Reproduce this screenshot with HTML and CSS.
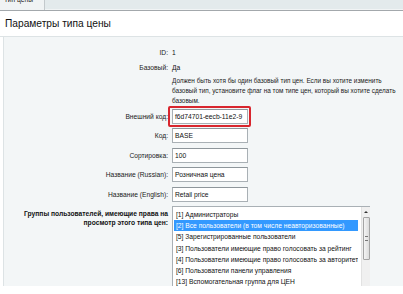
FILE: index.html
```html
<!DOCTYPE html>
<html lang="ru">
<head>
<meta charset="utf-8">
<title>Параметры типа цены</title>
<link rel="stylesheet" href="styles.css">
</head>
<body>
<div class="tabs"><div class="tab"><span class="tab-text">Тип цены</span></div></div>
<h1 class="title">Параметры типа цены</h1>
<div class="panel">
  <div class="row r15"><div class="lbl">ID:</div><div class="val">1</div></div>
  <div class="row r15"><div class="lbl">Базовый:</div><div class="val">Да</div></div>
  <div class="row note-row"><div class="lbl"></div><div class="val note">Должен быть хотя бы один базовый тип цен. Если вы хотите изменить<br>базовый тип, установите флаг на том типе цен, который вы хотите сделать<br>базовым.</div></div>
  <div class="row r20"><div class="lbl">Внешний код:</div><div class="val"><span class="marked"><span class="input">f6d74701-eecb-11e2-9</span><span class="redbox"></span></span></div></div>
  <div class="row r19"><div class="lbl">Код:</div><div class="val"><span class="input">BASE</span></div></div>
  <div class="row r19"><div class="lbl">Сортировка:</div><div class="val"><span class="input">100</span></div></div>
  <div class="row r19"><div class="lbl">Название (Russian):</div><div class="val"><span class="input">Розничная цена</span></div></div>
  <div class="row r19"><div class="lbl">Название (English):</div><div class="val"><span class="input">Retail price</span></div></div>
  <div class="row groups">
    <div class="lbl bold">Группы пользователей, имеющие права на<br>просмотр этого типа цен:</div>
    <div class="val">
      <div class="select">
        <div class="options">
          <div class="opt">[1] Администраторы</div>
          <div class="opt sel">[2] Все пользователи (в том числе неавторизованные)</div>
          <div class="opt">[5] Зарегистрированные пользователи</div>
          <div class="opt">[3] Пользователи имеющие право голосовать за рейтинг</div>
          <div class="opt">[4] Пользователи имеющие право голосовать за авторитет</div>
          <div class="opt">[6] Пользователи панели управления</div>
          <div class="opt">[13] Вспомогательная группа для ЦЕН</div>
          <div class="opt">[12] Администраторы информационного раздела</div>
        </div>
        <div class="scrollbar">
          <div class="arrow"></div>
          <div class="thumb"><div class="grip"></div></div>
        </div>
      </div>
    </div>
  </div>
</div>
</body>
</html>
```

FILE: styles.css
```css
html, body {
  margin: 0;
  padding: 0;
  background: #ffffff;
  overflow: hidden;
}
body {
  font-family: "Liberation Sans", Arial, sans-serif;
  font-size: 6.7px;
  color: #1a1a1a;
  width: 403px;
  height: 294px;
}
.tabs {
  height: 10px;
  background: #e3eaec;
  border-bottom: 1px solid #a3a8ac;
  box-shadow: inset 0 -1px 0 #f1f4f5;
  display: flex;
  overflow: hidden;
}
.tab {
  width: 44px;
  background: #f0f3f4;
  border-right: 1px solid #c3c9cc;
  overflow: hidden;
}
.tab-text {
  display: block;
  margin-top: -5px;
  padding-left: 4px;
  line-height: 9px;
  color: #222;
}
.title {
  margin: 0;
  display: flex;
  align-items: center;
  padding-left: 5px;
  font-size: 10.2px;
  font-weight: normal;
  color: #111;
  border-bottom: 1px solid #dde3e5;
  box-sizing: border-box;
  height: 26px;
}
.panel {
  margin-left: 3px;
  border-left: 1px solid #dde3e5;
  background: #f3f6f7;
  padding-top: 8px;
  height: 249px;
  box-sizing: border-box;
  overflow: hidden;
}
.row {
  display: flex;
  align-items: center;
}
.r15 { height: 15px; }
.r20 { height: 20px; }
.r19 { height: 19.5px; }
.note-row { height: 31px; }
.lbl {
  width: 164px;
  flex: none;
  text-align: right;
  color: #222;
}
.val {
  margin-left: 4px;
  color: #111;
}
.note {
  font-size: 6.4px;
  line-height: 10px;
  white-space: nowrap;
  color: #222;
}
.input {
  display: flex;
  align-items: center;
  box-sizing: border-box;
  width: 76px;
  height: 15px;
  background: #fff;
  border: 1px solid #a9b0b5;
  border-top-color: #8e969b;
  padding-left: 2px;
  white-space: nowrap;
  overflow: hidden;
  color: #111;
}
.marked {
  position: relative;
  display: block;
}
.redbox {
  position: absolute;
  left: -4px;
  right: -3px;
  top: -3px;
  bottom: -3px;
  border: 2px solid #d8262e;
  border-radius: 2px;
}
.groups {
  align-items: flex-start;
  margin-top: 2px;
}
.bold {
  font-weight: bold;
  line-height: 9px;
  padding-top: 3px;
  color: #111;
}
.select {
  width: 198px;
  height: 120px;
  box-sizing: border-box;
  background: #fff;
  border: 1px solid #a9b0b5;
  display: flex;
}
.options {
  flex: 1;
  padding: 2px 3px 0 1px;
}
.opt {
  line-height: 11.2px;
  height: 11.2px;
  padding-left: 2px;
  white-space: nowrap;
  overflow: hidden;
  color: #111;
}
.opt.sel {
  background: #3399ff;
  color: #fff;
}
.scrollbar {
  width: 8px;
  flex: none;
  background: #f0f0f0;
  border-left: 1px solid #e2e2e2;
  display: flex;
  flex-direction: column;
  align-items: center;
}
.arrow {
  margin-top: 4px;
  width: 0;
  height: 0;
  border-left: 2px solid transparent;
  border-right: 2px solid transparent;
  border-bottom: 2px solid #333;
}
.thumb {
  margin-top: 4px;
  width: 7px;
  height: 43px;
  box-sizing: border-box;
  border: 1px solid #a4a4a4;
  border-radius: 1px;
  background: linear-gradient(to right, #f4f4f4, #dcdcdc);
  display: flex;
  align-items: center;
  justify-content: center;
}
.grip {
  width: 3px;
  height: 3px;
  border-top: 1px solid #777;
  border-bottom: 1px solid #777;
}
```
